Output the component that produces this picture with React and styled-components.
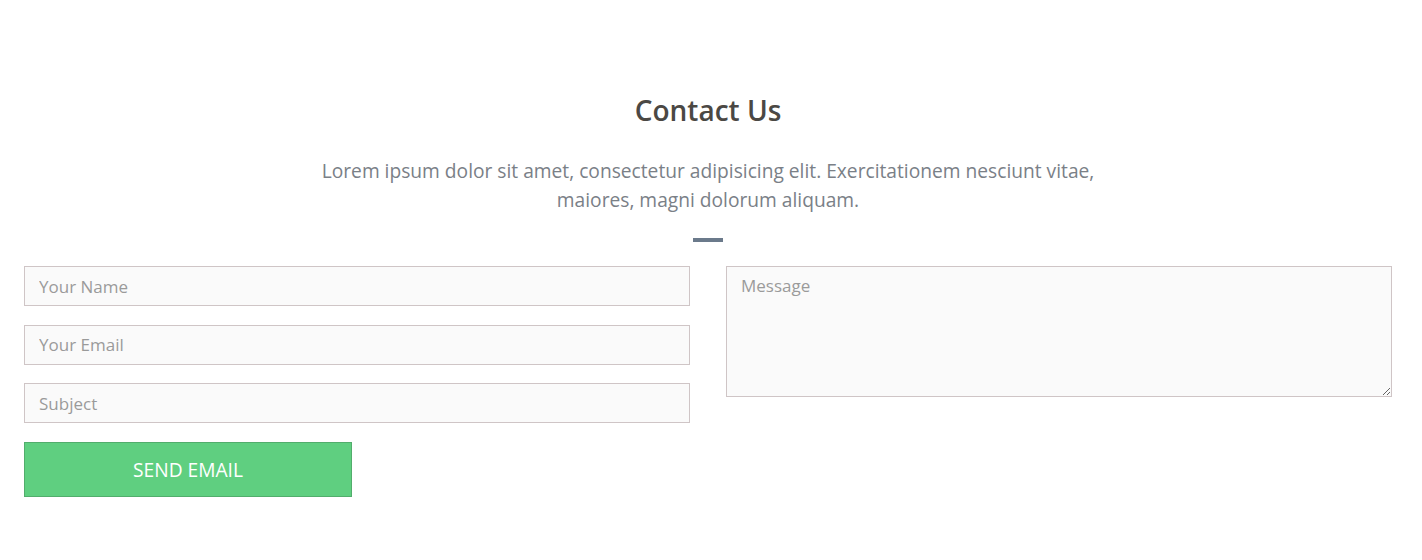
import React from "react";
import styled, { createGlobalStyle } from "styled-components";

const GlobalStyle = createGlobalStyle`
  body {
    margin: 0;
    background: #fff;
    font-family: "Open Sans", "Noto Sans", sans-serif;
  }
  * { box-sizing: border-box; }
`;

const Section = styled.section`
  padding: 92px 30px 40px 24px;
`;

const Header = styled.div`
  display: flex;
  flex-direction: column;
  align-items: center;
  text-align: center;
  margin-bottom: 24px;
`;

const Title = styled.h2`
  margin: 0 0 28px;
  font-size: 28px;
  font-weight: 600;
  line-height: 36px;
  color: #4b4844;
`;

const Lead = styled.p`
  margin: 0 0 24px;
  max-width: 820px;
  font-size: 19.2px;
  line-height: 29px;
  color: #7a8087;
`;

const Divider = styled.span`
  display: block;
  width: 30px;
  height: 4px;
  background: #6b7a8b;
`;

const Form = styled.form`
  display: grid;
  grid-template-columns: 1fr 1fr;
  column-gap: 36px;
  align-items: start;
`;

const Column = styled.div`
  display: flex;
  flex-direction: column;
  gap: 18.6px;
`;

const Field = styled.input`
  width: 100%;
  height: 40px;
  padding: 0 14px;
  border: 1px solid #cfc5c6;
  background: #fafafa;
  font-family: inherit;
  font-size: 17px;
  color: #555;
  outline: none;
  &::placeholder { color: #9a9a9a; }
`;

const Message = styled.textarea`
  width: 100%;
  height: 131px;
  padding: 7px 14px;
  border: 1px solid #cfc5c6;
  background: #fafafa;
  font-family: inherit;
  font-size: 17px;
  color: #555;
  outline: none;
  resize: both;
  display: block;
  &::placeholder { color: #9a9a9a; }
`;

const SendButton = styled.button`
  width: 328px;
  height: 55px;
  border: 1px solid #52ad6c;
  background: #5fcf80;
  color: #fff;
  font-family: inherit;
  font-size: 19.2px;
  text-transform: uppercase;
  cursor: pointer;
`;

export default function App() {
  return (
    <>
      <GlobalStyle />
      <Section>
        <Header>
          <Title>Contact Us</Title>
          <Lead>
            Lorem ipsum dolor sit amet, consectetur adipisicing elit.
            Exercitationem nesciunt vitae, maiores, magni dolorum aliquam.
          </Lead>
          <Divider />
        </Header>
        <Form onSubmit={(e) => e.preventDefault()}>
          <Column>
            <Field type="text" placeholder="Your Name" />
            <Field type="email" placeholder="Your Email" />
            <Field type="text" placeholder="Subject" />
            <SendButton type="submit">Send Email</SendButton>
          </Column>
          <Column>
            <Message placeholder="Message" />
          </Column>
        </Form>
      </Section>
    </>
  );
}
